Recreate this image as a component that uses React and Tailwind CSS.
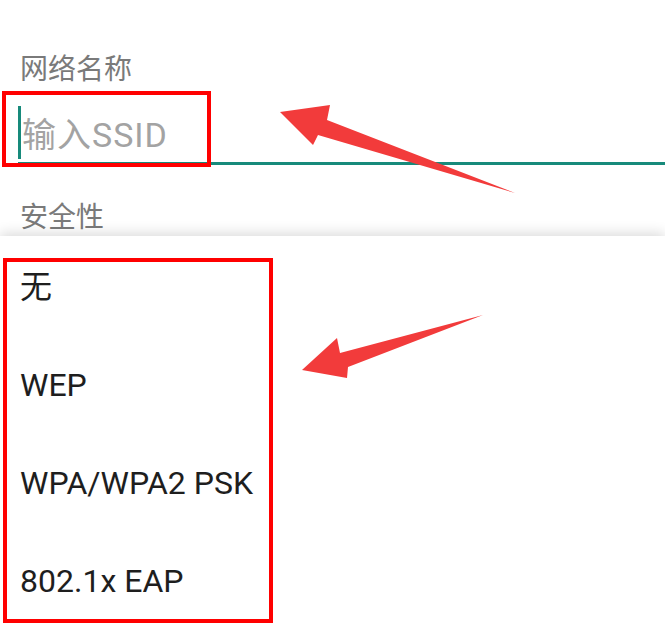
import React from "react";

export default function App() {
  const items = ["无", "WEP", "WPA/WPA2 PSK", "802.1x EAP"];
  return (
    <div
      className="relative w-[665px] h-[638px] overflow-hidden bg-white"
      style={{ fontFamily: 'Roboto, "Noto Sans CJK SC", sans-serif' }}
    >
      <div className="pt-[54px]">
        <div className="pl-5 text-[28px] leading-[32px] text-[#7a7a7a]">网络名称</div>
        <div className="ml-[18px] mt-[14px] h-[65px] flex items-center border-b-[3px] border-[#178a7b]">
          <div className="w-[3px] h-[53px] bg-[#178a7b] self-end mb-[3px]" />
          <span className="ml-[1px] mt-[8px] text-[34px] leading-[40px] tracking-[1px] text-[#a3a3a3]">输入SSID</span>
        </div>
        <div className="pl-5 mt-[37px] text-[28px] leading-[32px] text-[#7a7a7a]">安全性</div>
      </div>

      {/* dropdown popup */}
      <div className="absolute left-0 right-0 top-[236px] bottom-[-20px] bg-white shadow-[0_-3px_12px_rgba(0,0,0,0.14)] pt-[2px]">
        {items.map((t) => (
          <div key={t} className="h-[98px] flex items-center pl-5 text-[32px] text-[#1e1e1e]">
            {t}
          </div>
        ))}
      </div>

      {/* annotation boxes */}
      <div className="absolute left-[2px] top-[91px] w-[209px] h-[76px] border-4 border-[#ff0000]" />
      <div className="absolute left-[3px] top-[258px] w-[270px] h-[365px] border-4 border-[#ff0000]" />

      {/* annotation arrows */}
      <svg className="absolute left-0 top-0" width="665" height="638" viewBox="0 0 665 638">
        <polygon
          points="280,112 330,105 327,120 515,193 318,135 313,145"
          fill="#f23b3b"
        />
        <polygon
          points="302,370 337,338 340,353 483,315 348,367 347,378"
          fill="#f23b3b"
        />
      </svg>
    </div>
  );
}
